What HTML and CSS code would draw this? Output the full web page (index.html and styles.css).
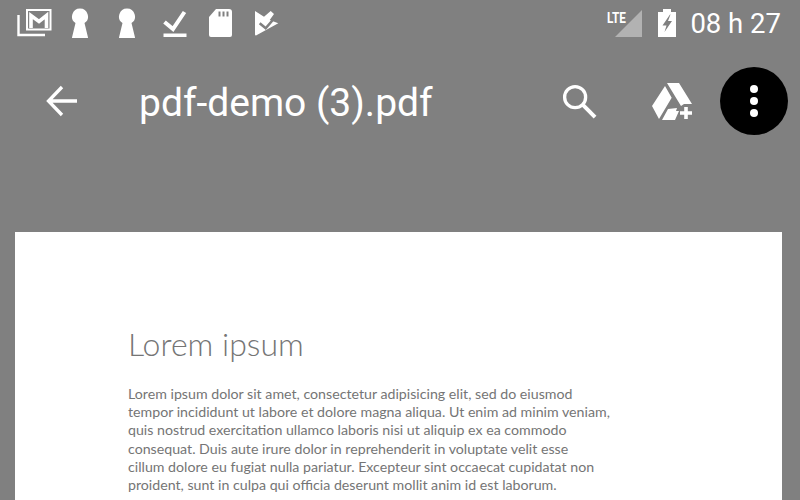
FILE: index.html
```html
<!DOCTYPE html>
<html lang="en">
<head>
    <meta charset="UTF-8">
    <title>pdf-demo (3).pdf</title>
    <link rel="stylesheet" href="styles.css">
</head>
<body>

    <div class="status-bar">
        <div class="status-left">
            <svg class="icon-gmail" width="36" height="30" viewBox="0 0 36 30">
                <path d="M2.500 7v20h26.500" fill="none" stroke="#fff" stroke-width="2.400"/>
                <rect x="11" y="2" width="23.500" height="19.500" fill="none" stroke="#fff" stroke-width="2"/>
                <path d="M15 20V7.500l8 6 7.500-6V20" fill="none" stroke="#fff" stroke-width="3.600"/>
            </svg>
            <svg class="icon-key" width="18" height="30" viewBox="0 0 18 30">
                <path fill="#fff" d="M9 0.500a8 8 0 0 1 4.500 14.600L17 29.500a1 1 0 0 1-1 1H2a1 1 0 0 1-1-1l3.500-14.400A8 8 0 0 1 9 0.500z"/>
            </svg>
            <svg class="icon-key key-second" width="18" height="30" viewBox="0 0 18 30">
                <path fill="#fff" d="M9 0.500a8 8 0 0 1 4.500 14.600L17 29.500a1 1 0 0 1-1 1H2a1 1 0 0 1-1-1l3.500-14.400A8 8 0 0 1 9 0.500z"/>
            </svg>
            <svg class="icon-done" width="24" height="30" viewBox="0 0 24 30">
                <path d="M1.500 14l8.500 7L21.500 4" fill="none" stroke="#fff" stroke-width="4"/>
                <path d="M0.500 25.500h23v3.500h-23z" fill="#fff"/>
            </svg>
            <svg class="icon-sd" width="24" height="30" viewBox="0 0 24 30">
                <path fill-rule="evenodd" fill="#fff" d="M8 1h13a3 3 0 0 1 3 3v23a2 2 0 0 1-2 2H3a2 2 0 0 1-2-2V9z M10.500 3.500v5h2v-5z M14.500 3.500v5h2v-5z M18.500 3.500v5h2v-5z"/>
            </svg>
            <svg class="icon-flag" width="26" height="30" viewBox="0 0 26 30">
                <path fill="#fff" d="M1 3l9 5.700L16.700 3l3.300 3-4.300 6 8.600 3.300L2 27.500a1 1 0 0 1-1-1z"/>
                <path d="M5.700 15.300l6 5L20.500 10" fill="none" stroke="#808080" stroke-width="2.600"/>
            </svg>
        </div>
        <div class="status-right">
            <div class="signal">
                <span class="lte">LTE</span>
                <svg width="27" height="27" viewBox="0 0 27 27">
                    <path d="M0 27L27 0v27z" fill="#b2b2b2"/>
                </svg>
            </div>
            <svg class="icon-battery" width="18" height="30" viewBox="0 0 18 30">
                <path fill-rule="evenodd" fill="#fff" d="M5 1h8v3h5v25H0V4h5z M12 6.500L4.500 17.500h4l-2 6.500 7.500-11h-4l2.500-6.500z"/>
            </svg>
            <span class="clock">08 h 27</span>
        </div>
    </div>

    <div class="app-bar">
        <svg class="icon-back" width="32" height="32" viewBox="0 0 32 32">
            <path d="M31 16H3M16 2L2.500 16 16 30" fill="none" stroke="#fff" stroke-width="3.300"/>
        </svg>
        <h1 class="title">pdf-demo (3).pdf</h1>
        <svg class="icon-search" width="35" height="35" viewBox="0 0 36 36">
            <circle cx="13.500" cy="13.500" r="10.800" fill="none" stroke="#fff" stroke-width="3.400"/>
            <path d="M21 21l13 13" stroke="#fff" stroke-width="4" fill="none"/>
        </svg>
        <svg class="icon-drive" width="42" height="38" viewBox="0 0 42 38">
            <path fill="#fff" d="M15 1h12l13 21-8 0-3 2zM13 4l6.700 11.700L7 37 0 24zM16 27l9-1-1 3 3 0-4 9H10z"/>
            <path fill="#fff" d="M32.200 25h3.600v4.200H40v3.600h-4.200V37h-3.600v-4.200H28v-3.600h4.200z"/>
        </svg>
        <div class="more-button">
            <span class="dot"></span>
            <span class="dot"></span>
            <span class="dot"></span>
        </div>
    </div>

    <div class="page">
        <h2 class="doc-heading">Lorem ipsum</h2>
        <p class="doc-text">Lorem ipsum dolor sit amet, consectetur adipisicing elit, sed do eiusmod<br>
        tempor incididunt ut labore et dolore magna aliqua. Ut enim ad minim veniam,<br>
        quis nostrud exercitation ullamco laboris nisi ut aliquip ex ea commodo<br>
        consequat. Duis aute irure dolor in reprehenderit in voluptate velit esse<br>
        cillum dolore eu fugiat nulla pariatur. Excepteur sint occaecat cupidatat non<br>
        proident, sunt in culpa qui officia deserunt mollit anim id est laborum.</p>
    </div>

</body>
</html>
```

FILE: styles.css
```css
body {
    margin: 0;
    width: 800px;
    height: 500px;
    overflow: hidden;
    background-color: #808080;
    font-family: Roboto, sans-serif;
    color: white;
}

svg {
    display: block;
    flex: none;
}

.status-bar {
    display: flex;
    justify-content: space-between;
    align-items: center;
    height: 46px;
    padding: 0 19px 0 16px;
}

.status-left {
    display: flex;
    align-items: center;
}

.icon-key {
    margin-left: 19px;
}

.key-second {
    margin-left: 29px;
}

.icon-done {
    margin-left: 27px;
}

.icon-sd {
    margin-left: 21px;
}

.icon-flag {
    margin-left: 22px;
}

.status-right {
    display: flex;
    align-items: center;
}

.signal {
    position: relative;
    width: 35px;
}

.signal svg {
    margin-left: 8px;
}

.lte {
    position: absolute;
    top: 1px;
    left: 0;
    font-size: 14px;
    font-weight: bold;
    line-height: 14px;
    transform: scaleX(0.84);
    transform-origin: left;
}

.icon-battery {
    margin-left: 16px;
}

.clock {
    margin-left: 14px;
    padding-top: 1px;
    font-size: 27.500px;
}

.app-bar {
    display: flex;
    align-items: center;
    height: 110px;
    padding: 0 12px 0 46px;
}

.title {
    flex: 1;
    margin: 0 0 0 61px;
    padding-top: 3px;
    font-size: 39px;
    font-weight: 400;
}

.icon-drive {
    margin-left: 55px;
}

.more-button {
    display: flex;
    flex-direction: column;
    justify-content: center;
    align-items: center;
    gap: 4px;
    width: 68px;
    height: 68px;
    margin-left: 26px;
    border-radius: 50%;
    background-color: black;
}

.dot {
    width: 8px;
    height: 8px;
    border-radius: 50%;
    background-color: white;
}

.page {
    height: 268px;
    margin: 76px 18px 0 15px;
    padding: 92px 0 0 113px;
    box-sizing: border-box;
    background-color: white;
    color: #757575;
    font-family: Lato, sans-serif;
}

.doc-heading {
    margin: 0;
    font-size: 32px;
    font-weight: 300;
    line-height: 40px;
}

.doc-text {
    margin: 21px 0 0 0;
    font-size: 14.200px;
    line-height: 18.200px;
    white-space: nowrap;
}
```
